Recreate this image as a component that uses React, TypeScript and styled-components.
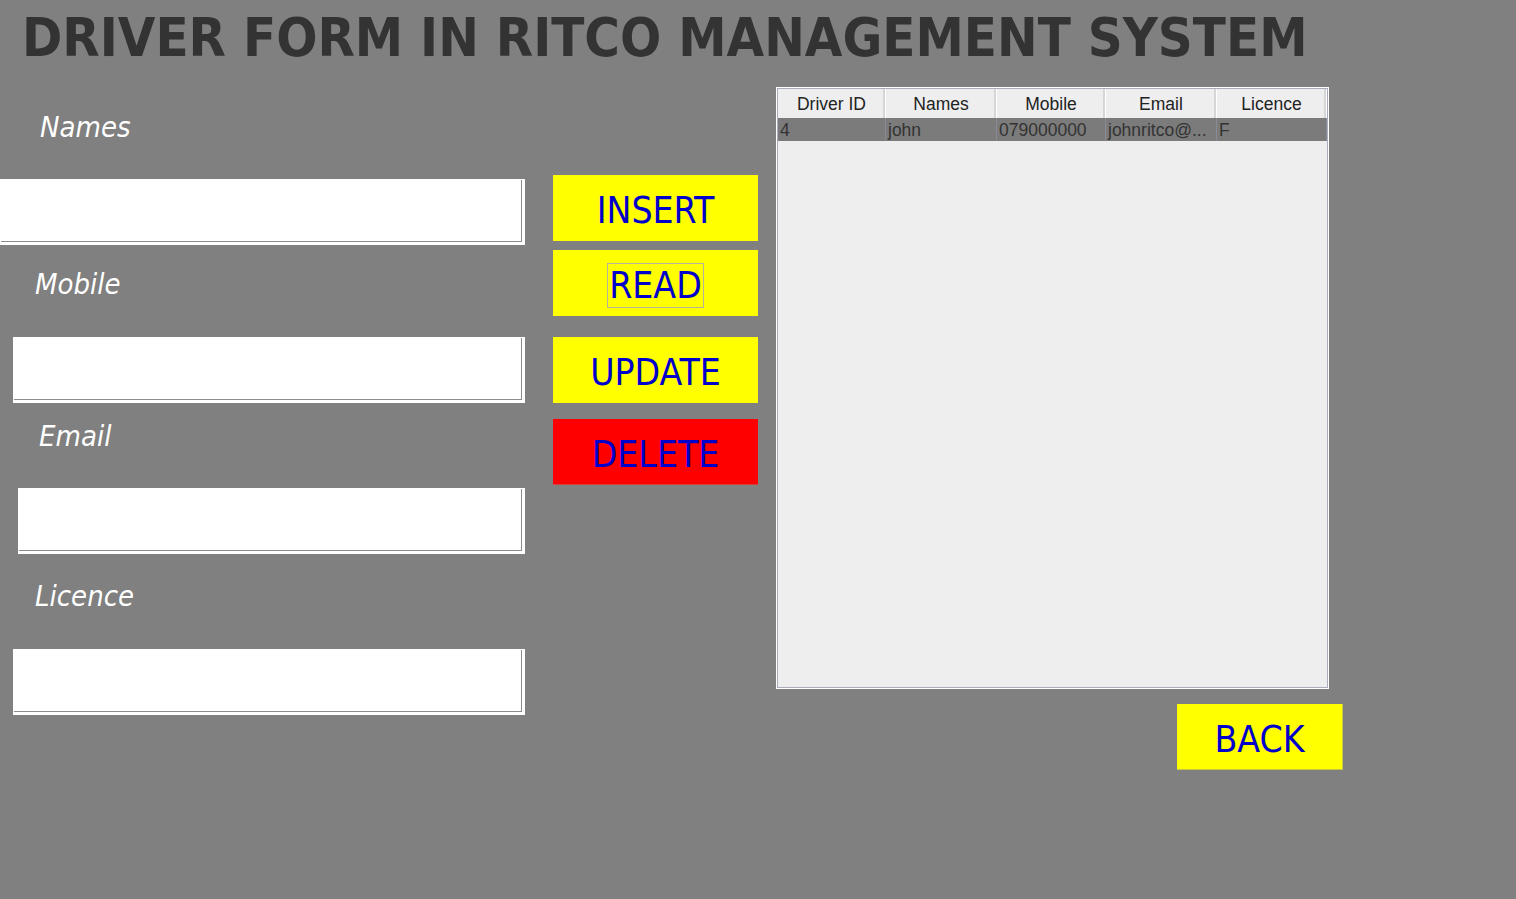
import React from 'react'
import styled, { createGlobalStyle } from 'styled-components'

const GlobalStyle = createGlobalStyle`
  html, body {
    margin: 0;
    padding: 0;
    background: #808080;
  }
  body {
    font-family: "DejaVu Sans Condensed", "DejaVu Sans", sans-serif;
  }
`

const Frame = styled.div`
  width: 1516px;
  height: 899px;
  background: #808080;
  overflow: hidden;
`

const Title = styled.h1`
  margin: 0;
  padding: 1px 0 0 22px;
  height: 74px;
  line-height: 74px;
  font-size: 54px;
  font-weight: bold;
  color: #333333;
  white-space: nowrap;
`

const Main = styled.div`
  display: flex;
  align-items: flex-start;
  margin-top: 12px;
`

const FormColumn = styled.div`
  display: flex;
  flex-direction: column;
  width: 525px;
`

const Label = styled.div<{ $left: number; $top: number }>`
  margin: ${p => p.$top}px 0 0 ${p => p.$left}px;
  height: 40px;
  line-height: 40px;
  font-size: 29px;
  font-style: italic;
  color: #ffffff;
`

const Input = styled.input<{ $left: number; $top: number }>`
  box-sizing: border-box;
  display: block;
  margin: ${p => p.$top}px 0 0 ${p => p.$left}px;
  width: ${p => 525 - p.$left}px;
  height: 66px;
  border: 1px solid #ffffff;
  border-radius: 0;
  outline: none;
  background: #ffffff;
  box-shadow: inset -2px -2px 0 #ffffff, inset -3px -3px 0 #8c8c8c;
  padding: 0 8px;
  font-family: "DejaVu Sans Condensed", "DejaVu Sans", sans-serif;
  font-size: 24px;
`

const ButtonColumn = styled.div`
  display: flex;
  flex-direction: column;
  width: 205px;
  margin-left: 28px;
  padding-top: 88px;
`

const ActionButton = styled.button<{ $danger?: boolean; $top?: number }>`
  box-sizing: border-box;
  display: flex;
  align-items: center;
  justify-content: center;
  margin-top: ${p => p.$top ?? 0}px;
  width: 205px;
  height: 66px;
  padding: 5px 0 0;
  border: none;
  border-bottom: 1px solid ${p => (p.$danger ? '#d84040' : '#ffff00')};
  background: ${p => (p.$danger ? '#ff0000' : '#ffff00')};
  color: #0000cc;
  font-family: "DejaVu Sans Condensed", "DejaVu Sans", sans-serif;
  font-size: 37px;
  cursor: pointer;
`

const FocusRing = styled.span`
  display: inline-block;
  padding: 0 1px;
  line-height: 43px;
  border: 1px solid #b4b4a0;
`

const TableColumn = styled.div`
  display: flex;
  flex-direction: column;
  align-items: flex-end;
  width: 567px;
  margin-left: 18px;
`

const TablePanel = styled.div`
  box-sizing: border-box;
  align-self: flex-start;
  width: 553px;
  height: 602px;
  border: 1px solid #ffffff;
  box-shadow: inset 0 0 0 1px #a8acbc;
  background: #eeeeee;
  padding: 1px;
  font-family: "Liberation Sans", Arial, sans-serif;
  font-size: 17.5px;
`

const Row = styled.div<{ $header?: boolean }>`
  display: grid;
  grid-template-columns: 108px 111px 109px 111px 110px;
  height: ${p => (p.$header ? 29 : 23)}px;
  background: ${p => (p.$header ? '#eeeeee' : '#7b7b7b')};
  color: ${p => (p.$header ? '#222222' : '#333333')};
`

const HeadCell = styled.div`
  display: flex;
  align-items: center;
  justify-content: center;
  border-right: 1px solid #ffffff;
  box-shadow: inset -2px 0 0 #d6d6d6;
  padding-top: 2px;
`

const Cell = styled.div`
  display: flex;
  align-items: center;
  padding: 1px 0 0 2px;
  border-right: 1px solid #8a8a96;
  white-space: nowrap;
  overflow: hidden;
`

const BackButton = styled(ActionButton)`
  width: 166px;
  margin-top: 15px;
  border-right: 1px solid #c8c83c;
  border-bottom: 1px solid #c8c83c;
`

const fields = [
  { label: 'Names', labelLeft: 40, labelTop: 20, inputLeft: 0, inputTop: 32 },
  { label: 'Mobile', labelLeft: 35, labelTop: 19, inputLeft: 13, inputTop: 33 },
  { label: 'Email', labelLeft: 39, labelTop: 13, inputLeft: 18, inputTop: 32 },
  { label: 'Licence', labelLeft: 35, labelTop: 22, inputLeft: 13, inputTop: 33 },
]

const columns = ['Driver ID', 'Names', 'Mobile', 'Email', 'Licence']
const drivers = [
  { id: '4', names: 'john', mobile: '079000000', email: 'johnritco@...', licence: 'F' },
]

export default function App() {
  return (
    <Frame>
      <GlobalStyle />
      <Title>DRIVER FORM IN RITCO MANAGEMENT SYSTEM</Title>
      <Main>
        <FormColumn>
          {fields.map(f => (
            <React.Fragment key={f.label}>
              <Label $left={f.labelLeft} $top={f.labelTop}>
                {f.label}
              </Label>
              <Input $left={f.inputLeft} $top={f.inputTop} />
            </React.Fragment>
          ))}
        </FormColumn>
        <ButtonColumn>
          <ActionButton>INSERT</ActionButton>
          <ActionButton $top={9}>
            <FocusRing>READ</FocusRing>
          </ActionButton>
          <ActionButton $top={21}>UPDATE</ActionButton>
          <ActionButton $top={16} $danger>
            DELETE
          </ActionButton>
        </ButtonColumn>
        <TableColumn>
          <TablePanel>
            <Row $header>
              {columns.map(c => (
                <HeadCell key={c}>{c}</HeadCell>
              ))}
            </Row>
            {drivers.map(d => (
              <Row key={d.id}>
                <Cell>{d.id}</Cell>
                <Cell>{d.names}</Cell>
                <Cell>{d.mobile}</Cell>
                <Cell>{d.email}</Cell>
                <Cell>{d.licence}</Cell>
              </Row>
            ))}
          </TablePanel>
          <BackButton>BACK</BackButton>
        </TableColumn>
      </Main>
    </Frame>
  )
}
